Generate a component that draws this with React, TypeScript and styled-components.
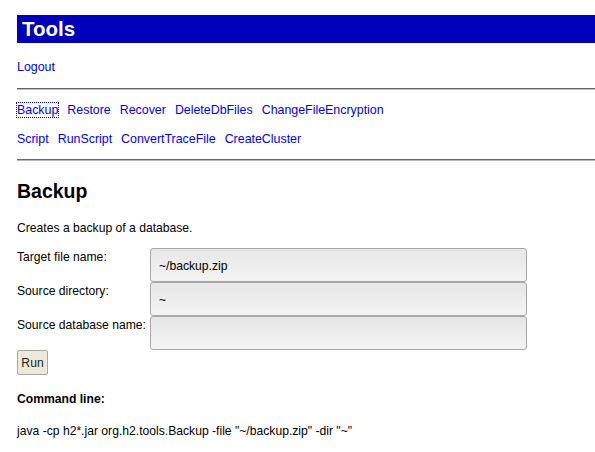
import React from "react";
import styled, { createGlobalStyle } from "styled-components";

const Global = createGlobalStyle`
  html, body { margin: 0; padding: 0; background: #fff; }
  body { font-family: "Liberation Sans", Arial, sans-serif; font-size: 12.15px; color: #000; }
`;

const Page = styled.div`
  display: flex;
  flex-direction: column;
  padding: 15px 0 0 17px;
  width: 578px;
`;

const Header = styled.h1`
  margin: 0;
  height: 28px;
  background: #0000bb;
  color: #fff;
  font-size: 20.5px;
  font-weight: bold;
  line-height: 28px;
  padding-left: 5px;
`;

const Link = styled.a<{ $focused?: boolean }>`
  color: #0000ff;
  text-decoration: none;
  font-size: 12.4px;
  line-height: 14px;
  outline: ${(p) => (p.$focused ? "1px dotted #0000ff" : "none")};
  outline-offset: 0px;
  cursor: pointer;
`;

const LogoutRow = styled.div`
  margin-top: 17px;
  height: 14px;
  display: flex;
`;

const Rule = styled.div<{ $top: number }>`
  margin-top: ${(p) => p.$top}px;
  height: 0;
  border-top: 1px solid #666;
  border-bottom: 1px solid #bbb;
`;

const LinkRow = styled.div<{ $top: number }>`
  margin-top: ${(p) => p.$top}px;
  display: flex;
  gap: 9px;
  height: 14px;
`;

const Title = styled.h2`
  margin: 19px 0 0 0;
  font-size: 19.5px;
  font-weight: bold;
  line-height: 22px;
`;

const Desc = styled.p`
  margin: 19px 0 0 0;
  line-height: 14px;
`;

const Form = styled.div`
  margin-top: 13px;
  display: grid;
  grid-template-columns: 133px 377px;
  row-gap: 0;
`;

const Label = styled.div`
  padding-top: 2px;
  line-height: 14px;
  white-space: nowrap;
`;

const Input = styled.input`
  box-sizing: border-box;
  width: 377px;
  height: 34px;
  margin: 0;
  border: 1px solid #a8a8a8;
  border-radius: 3px;
  background: linear-gradient(#e6e6e6, #f4f4f4);
  font-family: "Liberation Sans", Arial, sans-serif;
  font-size: 12.15px;
  color: #000;
  padding: 2px 8px 0 8px;
  outline: none;
`;

const RunButton = styled.button`
  align-self: flex-start;
  margin-top: 0;
  width: 31px;
  height: 25px;
  padding: 0;
  border: 1px solid #a8a8a0;
  border-radius: 2px;
  background: #ece9d8;
  font-family: "Liberation Sans", Arial, sans-serif;
  font-size: 12.15px;
  color: #222;
`;

const CmdLabel = styled.div`
  margin-top: 17px;
  font-weight: bold;
  line-height: 14px;
`;

const CmdText = styled.div`
  margin-top: 18px;
  line-height: 14px;
`;

export default function App() {
  const row1 = ["Backup", "Restore", "Recover", "DeleteDbFiles", "ChangeFileEncryption"];
  const row2 = ["Script", "RunScript", "ConvertTraceFile", "CreateCluster"];
  return (
    <>
      <Global />
      <Page>
        <Header>Tools</Header>
        <LogoutRow>
          <Link>Logout</Link>
        </LogoutRow>
        <Rule $top={14} />
        <LinkRow $top={13}>
          {row1.map((t, i) => (
            <Link key={t} $focused={i === 0}>{t}</Link>
          ))}
        </LinkRow>
        <LinkRow $top={15}>
          {row2.map((t) => (
            <Link key={t}>{t}</Link>
          ))}
        </LinkRow>
        <Rule $top={13} />
        <Title>Backup</Title>
        <Desc>Creates a backup of a database.</Desc>
        <Form>
          <Label>Target file name:</Label>
          <Input defaultValue="~/backup.zip" />
          <Label>Source directory:</Label>
          <Input defaultValue="~" />
          <Label>Source database name:</Label>
          <Input defaultValue="" />
        </Form>
        <RunButton>Run</RunButton>
        <CmdLabel>Command line:</CmdLabel>
        <CmdText>java -cp h2*.jar org.h2.tools.Backup -file "~/backup.zip" -dir "~"</CmdText>
      </Page>
    </>
  );
}
